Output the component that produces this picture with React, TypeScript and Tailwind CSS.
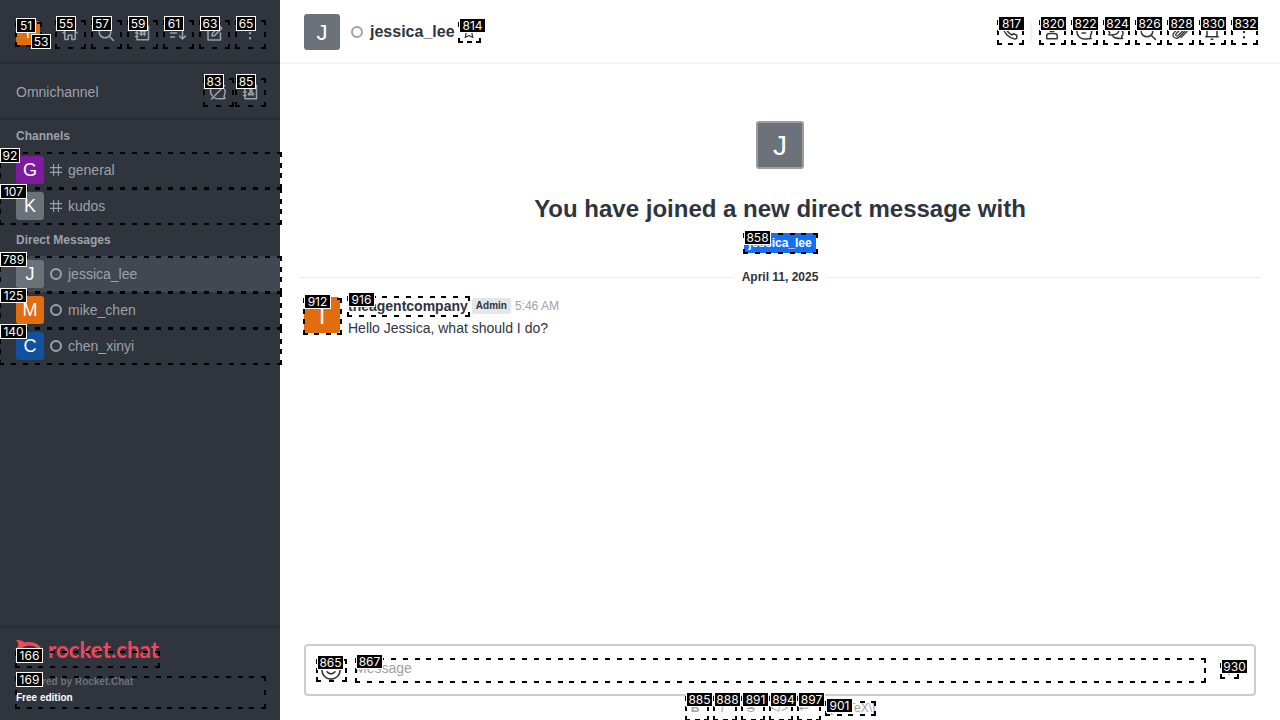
import type { ReactNode } from "react";

type IconProps = { children: ReactNode; size?: string; sw?: number };

function Icon({ children, size = "size-5", sw = 1.5 }: IconProps) {
  return (
    <svg viewBox="0 0 20 20" className={`${size} shrink-0`} fill="none" stroke="currentColor" strokeWidth={sw} strokeLinecap="round" strokeLinejoin="round">
      {children}
    </svg>
  );
}

const HomeIcon = () => (
  <Icon><path d="M3 10 10 3.5 17 10M4.8 9v6.7q0 .8.8.8h2.6v-4.3h3.6v4.3h2.6q.8 0 .8-.8V9" /></Icon>
);
const SearchIcon = () => (
  <Icon><circle cx="9" cy="9" r="5.8" /><path d="m13.2 13.2 4.3 4.3" /></Icon>
);
const DirectoryIcon = () => (
  <Icon><path d="M5 3.2h11.5v13.5H5zM3.5 6.5h2.5M3.5 10h2.5M3.5 13.5h2.5M9.6 7l-.4 5.4M12.7 7l-.4 5.4M8.2 8.5h5.4M8 11h5.4" /></Icon>
);
const SortIcon = () => (
  <Icon><path d="M2.5 6h7M2.5 10h6M2.5 14h4M14.5 4v12M11.5 13l3 3 3-3" /></Icon>
);
const EditIcon = () => (
  <Icon><path d="M10.5 4H4v13h12.5v-7M8 13l.5-2.8L15.6 3l2.2 2.2-7.1 7.2z" /></Icon>
);
const KebabIcon = () => (
  <Icon><path d="M10 4.7v.1M10 10v.1M10 15.2v.1" strokeWidth="2.4" /></Icon>
);
const QueueOffIcon = () => (
  <Icon><path d="M14.8 4.6A7 7 0 0 0 4.2 13.8M6.2 15.8c3 1.6 7.5 1 10.8.6-1.2-1-1.2-2-.5-3.4a7 7 0 0 0 .2-5.8M3.5 17 16.5 3.5" /></Icon>
);
const ContactBookIcon = () => (
  <Icon><path d="M5 3.2h11.5v13.5H5zM3.5 6.5h2.5M3.5 10h2.5M3.5 13.5h2.5M8.5 12.8h5v-1.1l-1.6-1h-1.8l-1.6 1z" /><circle cx="11" cy="8.2" r="1.1" /></Icon>
);
const PhoneIcon = () => (
  <Icon><path d="M4.4 3.2 7 3l1.3 3.5-1.5 1.7c1 2 2.8 3.8 4.9 4.9l1.8-1.4 3.3 1.5v2.2c0 1-1 1.7-2 1.5C8.500 16 3.500 10.500 3.100 5c0-.9.5-1.700 1.300-1.800Z" /></Icon>
);
const UserIcon = () => (
  <Icon><circle cx="10" cy="6.500" r="3" /><path d="M4.700 16.300v-2.200c0-1.700 1.500-2.600 3-2.600h4.600c1.500 0 3 .9 3 2.600v2.200q0 .5-.5.5H5.200q-.5 0-.5-.5Z" /></Icon>
);
const DiscussionIcon = () => (
  <Icon><path d="M10 2.800a7 7 0 1 0 0 14.100c2.200.3 4.500.1 7.200-.3-1.200-1-1.300-2-.7-3.100A7 7 0 0 0 10 2.800ZM7.500 8h5M8 11h3.500" /></Icon>
);
const ThreadIcon = () => (
  <Icon><path d="M8.500 3C4.500 3 2.500 5.300 2.500 7.800c0 1.200.5 2.200 1.300 3l-.9 2c3.800.3 10 .2 10-5C12.900 5 11 3 8.500 3ZM6.500 13.200c1 3.500 5.500 3.500 10 3.300l-1-2c2.300-1.800 2-5.200-.3-6.500" /></Icon>
);
const ClipIcon = () => (
  <Icon sw={1.3}><path d="m15.800 8.300-6.900 7a3.300 3.300 0 0 1-4.800-4.700l7-7a2.400 2.400 0 0 1 3.500 3.400L8 13.600a1.300 1.300 0 0 1-1.900-1.900l5.800-5.800M17 9.500l-6 6" /></Icon>
);
const BellIcon = () => (
  <Icon><path d="M3.800 14.700h12.400M5 14.500V8.300C5 5.300 7.200 3 10 3s5 2.300 5 5.300v6.200M9.200 17.200h1.600" /></Icon>
);
const StarIcon = () => (
  <Icon size="size-4"><path d="m10 2.500 2.300 5 5.300.6-4 3.600 1.200 5.300-4.800-2.700L5.200 17l1.200-5.300-4-3.600 5.300-.6z" /></Icon>
);
const SmileIcon = () => (
  <Icon size="size-6" sw={1.3}><circle cx="10" cy="10" r="7.600" /><path d="M6.700 11.500c1.700 2.300 4.900 2.300 6.600 0M7.300 7.700v.1M12.700 7.700v.1" /></Icon>
);
const HashIcon = () => (
  <Icon size="size-4"><path d="M7 3v14M13 3v14M3 7h14M3 13h14" strokeWidth="1.400" /></Icon>
);
const StatusRing = () => (
  <svg viewBox="0 0 12 12" className="size-3 shrink-0" fill="none" stroke="#9ea2a8" strokeWidth="2"><circle cx="6" cy="6" r="5" /></svg>
);

function Row({ letter, color, name, channel, active }: { letter: string; color: string; name: string; channel?: boolean; active?: boolean }) {
  return (
    <div className={`flex h-9 items-center px-4 text-sm ${active ? "bg-[#414852]" : ""}`}>
      <div className={`flex size-7 items-center justify-center rounded-[3px] text-[18px] leading-none text-white ${color}`}>{letter}</div>
      <div className="ml-1 flex w-4 justify-center">{channel ? <HashIcon /> : <StatusRing />}</div>
      <span className="ml-1">{name}</span>
    </div>
  );
}

const IconButton = ({ children }: { children: ReactNode }) => (
  <div className="flex size-7 items-center justify-center">{children}</div>
);

type Mark = { id: number; box?: [number, number, number, number]; at: [number, number] };

const marks: Mark[] = [
  { id: 51, box: [15, 22, 27, 25], at: [16, 18] },
  { id: 53, at: [31, 34] },
  { id: 55, box: [55, 20, 31, 29], at: [56, 16] },
  { id: 57, box: [91, 20, 31, 29], at: [92, 16] },
  { id: 59, box: [127, 20, 31, 29], at: [128, 16] },
  { id: 61, box: [163, 20, 31, 29], at: [164, 16] },
  { id: 63, box: [199, 20, 31, 29], at: [200, 16] },
  { id: 65, box: [235, 20, 31, 29], at: [236, 16] },
  { id: 83, box: [203, 78, 31, 29], at: [204, 74] },
  { id: 85, box: [235, 78, 31, 29], at: [236, 74] },
  { id: 92, box: [-1, 152, 283, 37], at: [0, 148] },
  { id: 107, box: [-1, 188, 283, 37], at: [0, 184] },
  { id: 789, box: [-1, 256, 283, 37], at: [0, 252] },
  { id: 125, box: [-1, 292, 283, 37], at: [0, 288] },
  { id: 140, box: [-1, 328, 283, 37], at: [0, 324] },
  { id: 166, box: [15, 651, 145, 17], at: [16, 648] },
  { id: 169, box: [15, 676, 251, 33], at: [16, 672] },
  { id: 814, box: [458, 22, 23, 21], at: [459, 18] },
  { id: 817, box: [997, 20, 27, 25], at: [998, 16] },
  { id: 820, box: [1039, 20, 27, 25], at: [1040, 16] },
  { id: 822, box: [1071, 20, 27, 25], at: [1072, 16] },
  { id: 824, box: [1103, 20, 27, 25], at: [1104, 16] },
  { id: 826, box: [1135, 20, 27, 25], at: [1136, 16] },
  { id: 828, box: [1167, 20, 27, 25], at: [1168, 16] },
  { id: 830, box: [1199, 20, 27, 25], at: [1200, 16] },
  { id: 832, box: [1231, 20, 27, 25], at: [1232, 16] },
  { id: 858, box: [743, 233, 75, 21], at: [744, 230] },
  { id: 912, box: [303, 298, 39, 37], at: [304, 294] },
  { id: 916, box: [347, 296, 123, 21], at: [348, 292] },
  { id: 865, box: [316, 659, 31, 23], at: [317, 655] },
  { id: 867, box: [355, 658, 851, 25], at: [356, 654] },
  { id: 885, box: [685, 696, 24, 25], at: [686, 692] },
  { id: 888, box: [713, 696, 24, 25], at: [714, 692] },
  { id: 891, box: [741, 696, 24, 25], at: [742, 692] },
  { id: 894, box: [769, 696, 24, 25], at: [770, 692] },
  { id: 897, box: [797, 696, 24, 25], at: [798, 692] },
  { id: 901, box: [825, 701, 51, 15], at: [826, 698] },
  { id: 930, box: [1220, 663, 19, 16], at: [1221, 659] },
];

const DASH = 5;

// Spreads dashes evenly so that each edge starts and ends with a full dash.
function dashes(length: number) {
  const count = Math.max(1, Math.round((length - DASH) / 12));
  return `${DASH} ${(length - DASH) / count - DASH}`;
}

function DashedBox({ box: [x, y, w, h] }: { box: [number, number, number, number] }) {
  return (
    <g fill="none" stroke="#000" strokeWidth="2">
      <path d={`M${x} ${y + 1}h${w}M${x} ${y + h - 1}h${w}`} strokeDasharray={dashes(w)} />
      <path d={`M${x + 1} ${y}v${h}M${x + w - 1} ${y}v${h}`} strokeDasharray={dashes(h)} />
    </g>
  );
}

function Overlay() {
  return (
    <div className="pointer-events-none absolute inset-0 overflow-hidden">
      <svg viewBox="0 0 1280 720" className="absolute inset-0 h-[720px] w-[1280px]" shapeRendering="crispEdges">
        {marks.map(({ id, box }) => (box ? <DashedBox key={id} box={box} /> : null))}
      </svg>
      {marks.map(({ id, at }) => (
        <div
          key={id}
          className={`absolute flex h-[15px] items-center justify-center border border-white bg-black [font-family:Inter,sans-serif] text-[12px] leading-[13px] text-white ${id > 99 ? "w-[27px]" : "w-5"}`}
          style={{ left: at[0], top: at[1] }}
        >
          {id}
        </div>
      ))}
    </div>
  );
}

function Sidebar() {
  return (
    <aside className="flex w-[280px] flex-col bg-[#2f343d] text-[#9ea2a8]">
      <div className="flex h-16 items-center border-b-2 border-[#282c33] px-4 pt-1">
        <div className="flex size-6 items-center justify-center rounded-[3px] bg-[#e26d0e] text-[16px] text-white">T</div>
        <div className="ml-4 flex gap-2">
          <IconButton><HomeIcon /></IconButton>
          <IconButton><SearchIcon /></IconButton>
          <IconButton><DirectoryIcon /></IconButton>
          <IconButton><SortIcon /></IconButton>
          <IconButton><EditIcon /></IconButton>
          <IconButton><KebabIcon /></IconButton>
        </div>
      </div>
      <div className="flex h-14 items-center border-b-2 border-[#282c33] pr-4 pl-4 pt-0.5 text-sm">
        <span className="flex-1">Omnichannel</span>
        <div className="flex gap-1">
          <IconButton><QueueOffIcon /></IconButton>
          <IconButton><ContactBookIcon /></IconButton>
        </div>
      </div>
      <div className="flex h-8 items-center px-4 text-xs font-bold">Channels</div>
      <Row letter="G" color="bg-[#7f1b9f]" name="general" channel />
      <Row letter="K" color="bg-[#6c727a]" name="kudos" channel />
      <div className="flex h-8 items-center px-4 text-xs font-bold">Direct Messages</div>
      <Row letter="J" color="bg-[#6c727a]" name="jessica_lee" active />
      <Row letter="M" color="bg-[#e26d0e]" name="mike_chen" />
      <Row letter="C" color="bg-[#10529e]" name="chen_xinyi" />
      <div className="mt-auto h-[94px] border-t-2 border-[#282c33] px-4 pt-2.5">
        <svg viewBox="0 0 144 28" className="h-7 w-36 overflow-visible">
          <path d="M0 2.200c3-.8 6.500.2 8.500 2.300 7.500-1.500 17 1.500 17 8.500S16 23.300 8.500 21.700C6.500 24.800 3 26 0 25c2.200-2 3-4.500 2.200-7-2.800-3-2.800-7 0-10C2.600 5.800 2 4 0 2.200Z" fill="#f5455c" />
          <ellipse cx="13.500" cy="13" rx="8.500" ry="5.600" fill="#2f343d" />
          <text x="32" y="20" textLength="111" lengthAdjust="spacingAndGlyphs" fill="#f5455c" className="[font-family:Lato,sans-serif] text-[22px] font-bold">rocket.chat</text>
        </svg>
        <div className="mt-2 text-[10px] leading-4 font-bold text-[#6c727a]">Powered by Rocket.Chat</div>
        <div className="text-[10px] leading-4 font-bold text-white">Free edition</div>
      </div>
    </aside>
  );
}

export default function App() {
  return (
    <div className="relative flex h-[720px] w-[1280px] overflow-hidden bg-white font-['Liberation_Sans',Arial,sans-serif] text-[#2f343d]">
      <Sidebar />
      <main className="flex min-w-0 flex-1 flex-col">
        <header className="flex h-16 shrink-0 items-center border-b-2 border-[#f2f3f4] pt-0.5 pr-[22px] pl-6">
          <div className="flex size-9 items-center justify-center rounded-[3px] bg-[#6c727a] pt-px text-[22px] text-white">J</div>
          <div className="ml-[11px]"><StatusRing /></div>
          <h1 className="ml-[7px] text-[16px] font-bold">jessica_lee</h1>
          <div className="ml-1.5"><StarIcon /></div>
          <div className="ml-auto flex items-center gap-1">
            <IconButton><PhoneIcon /></IconButton>
            <div className="mx-0.5 h-5 w-0.5 bg-[#f2f3f4]" />
            <IconButton><UserIcon /></IconButton>
            <IconButton><DiscussionIcon /></IconButton>
            <IconButton><ThreadIcon /></IconButton>
            <IconButton><SearchIcon /></IconButton>
            <IconButton><ClipIcon /></IconButton>
            <IconButton><BellIcon /></IconButton>
            <IconButton><KebabIcon /></IconButton>
          </div>
        </header>
        <section className="flex flex-1 flex-col">
          <div className="flex flex-col items-center pt-[57px]">
            <div className="flex size-12 items-center justify-center rounded-[3px] border-2 border-[#9e9e9e] bg-[#6c727a] pt-0.5 text-[28px] text-white">J</div>
            <h2 className="mt-6 text-[24px] leading-8 font-bold">You have joined a new direct message with</h2>
            <div className="mt-2 flex h-5 items-center rounded-[2px] bg-[#156ff5] px-1 text-xs font-bold text-white">jessica_lee</div>
          </div>
          <div className="mt-4 flex h-4 items-center gap-2 px-5 text-xs font-bold">
            <div className="h-px flex-1 bg-[#ebecef]" />
            <span className="w-[78px] text-center whitespace-nowrap">April 11, 2025</span>
            <div className="h-px flex-1 bg-[#ebecef]" />
          </div>
          <div className="mt-3 flex gap-2 px-6">
            <div className="flex size-9 items-center justify-center rounded-[3px] bg-[#e26d0e] pt-0.5 text-[24px] text-white">T</div>
            <div className="text-sm">
              <div className="-mt-px flex h-5 items-center">
                <span className="font-bold">theagentcompany</span>
                <span className="ml-1 flex h-4 items-center rounded-[2px] bg-[#e4e7ea] px-1 text-[10px] font-bold">Admin</span>
                <span className="ml-1 text-xs text-[#9ea2a8]">5:46 AM</span>
              </div>
              <p className="mt-0.5 leading-5">Hello Jessica, what should I do?</p>
            </div>
          </div>
        </section>
        <footer className="h-[76px] shrink-0 px-6">
          <div className="flex h-[52px] items-center rounded-[4px] border-2 border-[#cbced1] pr-[15px] pl-[13px]">
            <SmileIcon />
            <span className="ml-3 flex-1 pb-1 text-sm text-[#9ea2a8]">Message</span>
            <Icon><path d="M10 5v9M5 10h10" /></Icon>
          </div>
          <div className="flex h-6 items-center justify-center text-[#9ea2a8]">
            <div className="flex text-xs">
              <span className="w-7 pl-1.5 font-bold">B</span>
              <span className="w-7 pl-2 italic">I</span>
              <span className="w-7 pl-1.5 line-through">S</span>
              <span className="w-7 pl-0.5">&lt;/&gt;</span>
              <span className="w-7 pl-0.5">↩</span>
              <span className="pl-0.5">\[KaTeX\]</span>
            </div>
          </div>
        </footer>
      </main>
      <Overlay />
    </div>
  );
}
